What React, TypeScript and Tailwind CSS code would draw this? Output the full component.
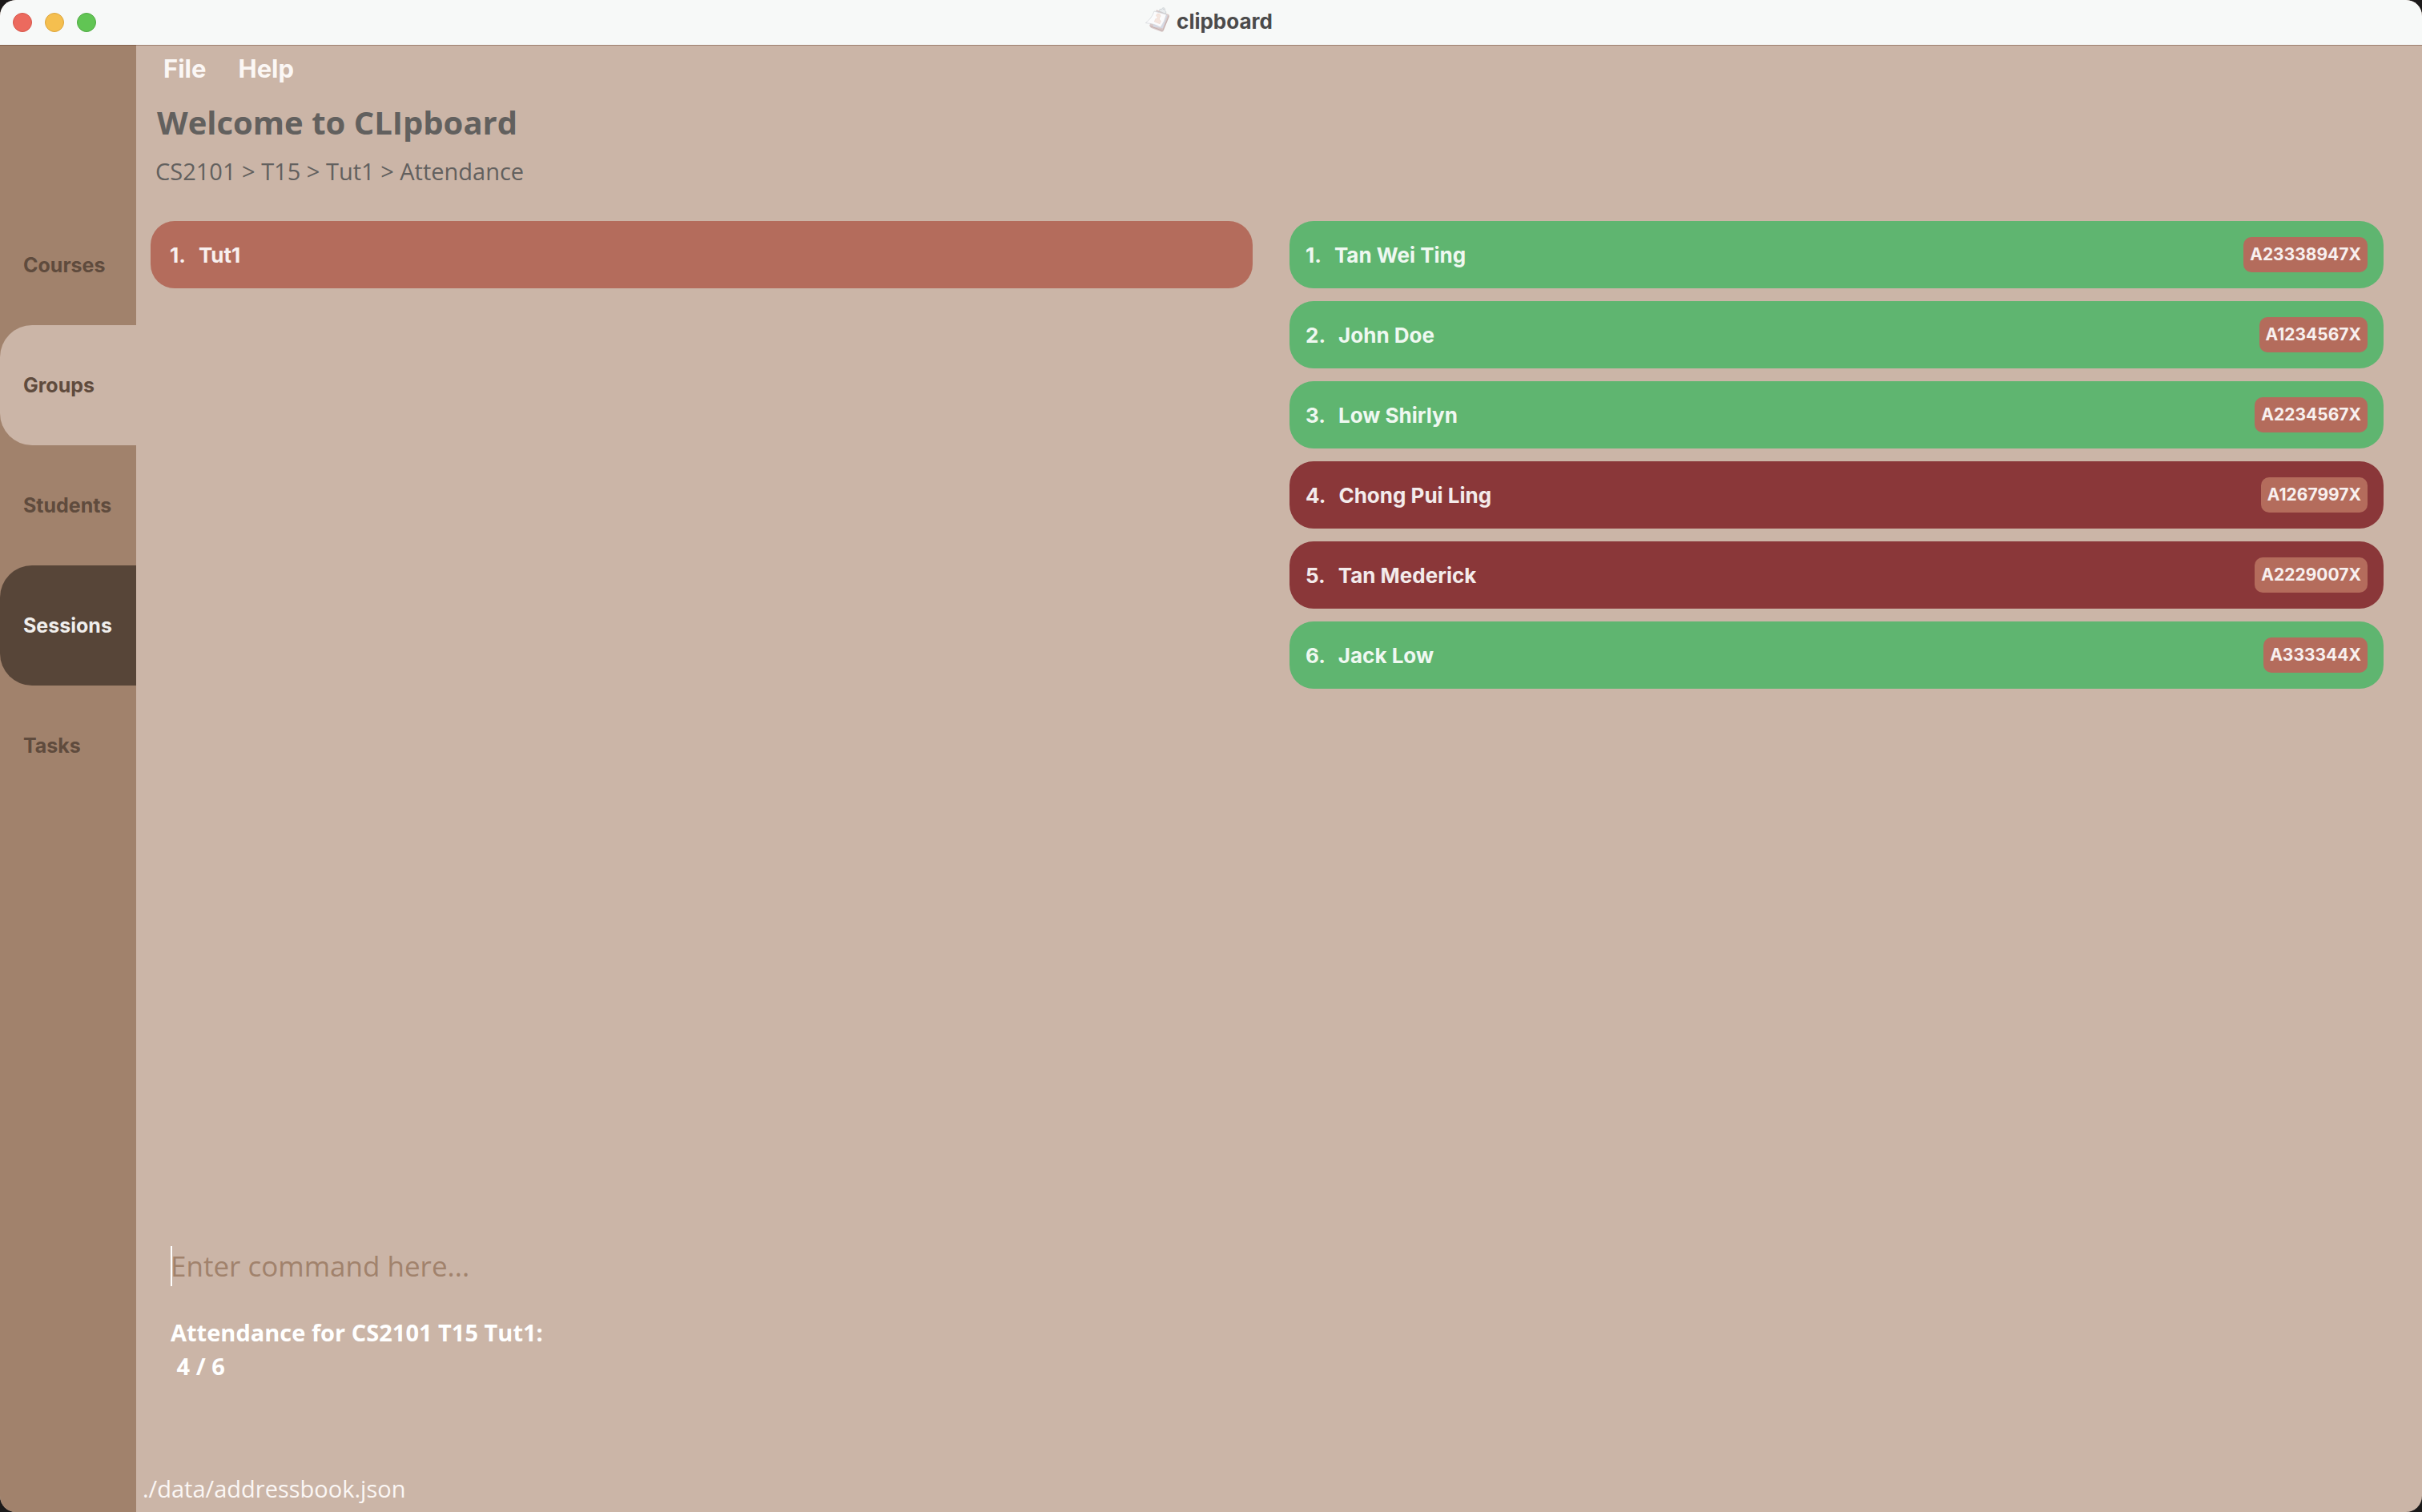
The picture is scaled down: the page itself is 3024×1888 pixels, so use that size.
import React from "react";

type Tab = { name: string; state: "idle" | "open" | "active" };
type Student = { name: string; id: string; present: boolean };

const tabs: Tab[] = [
  { name: "Courses", state: "idle" },
  { name: "Groups", state: "open" },
  { name: "Students", state: "idle" },
  { name: "Sessions", state: "active" },
  { name: "Tasks", state: "idle" },
];

const tabStyles: Record<Tab["state"], string> = {
  idle: "text-[#5f4b3d]",
  open: "bg-[#cbb5a7] text-[#5f4b3d]",
  active: "bg-[#574538] text-[#f0eeec]",
};

const sessions = ["Tut1"];

const students: Student[] = [
  { name: "Tan Wei Ting", id: "A23338947X", present: true },
  { name: "John Doe", id: "A1234567X", present: true },
  { name: "Low Shirlyn", id: "A2234567X", present: true },
  { name: "Chong Pui Ling", id: "A1267997X", present: false },
  { name: "Tan Mederick", id: "A2229007X", present: false },
  { name: "Jack Low", id: "A333344X", present: true },
];

function ClipboardIcon() {
  return (
    <svg viewBox="0 0 120 120" className="size-10" aria-hidden="true">
      <path d="M57 19 L102 36 Q107 38 105 43 L83 98 Q81 102 76 101 L36 86 L30 78 Z" fill="#d9c9c8" />
      <path d="M34 80 L76 96 Q80 97 82 93 L103 43" fill="none" stroke="#c4b0af" strokeWidth="3" />
      <path d="M56 24 L98 40 L80 88 L44 82 Z" fill="#d5dae6" />
      <path d="M48 24 L94 36 Q88 62 72 85 Q50 70 16 68 Q40 50 48 24 Z" fill="#fbfbfc" stroke="#cfd1d6" strokeWidth="2" />
      <path d="M56 42 a8 8 0 1 1 12 6 l-1 7 l6 5 l-4 11 l-20 -8 l4 -10 l7 -1 l1 -5 Z" fill="#f5e6df" stroke="#ead3c8" strokeWidth="1.5" />
      <path d="M66 23 L70 16 L77 17 Q77 10 84 11 Q91 13 88 21 L93 26 L91 34 Z" fill="#e9ecee" stroke="#c3c8cc" strokeWidth="2" />
      <circle cx="83" cy="16" r="2" fill="#c3c8cc" />
    </svg>
  );
}

function TitleBar() {
  return (
    <header className="relative z-10 grid h-14 grid-cols-3 items-center bg-[#f7f9f8] px-4 shadow-[0_1px_0_rgba(90,50,30,0.4)]">
      <div className="flex gap-4">
        <button aria-label="Close" className="size-6 rounded-full border border-[#d65549] bg-[#ec6a5e]" />
        <button aria-label="Minimize" className="size-6 rounded-full border border-[#dba53d] bg-[#f5bf4f]" />
        <button aria-label="Zoom" className="size-6 rounded-full border border-[#50a943] bg-[#61c554]" />
      </div>
      <div className="flex items-center justify-center pr-2.5 pb-1 text-[26px] font-bold text-[#4b4b4b]">
        <ClipboardIcon />
        <h1 className="pl-1">clipboard</h1>
      </div>
    </header>
  );
}

function Sidebar() {
  return (
    <nav aria-label="Sections" className="flex w-[170px] shrink-0 flex-col bg-[#a1826c] pt-[200px]">
      {tabs.map((tab) => (
        <button
          key={tab.name}
          aria-current={tab.state === "active" ? "page" : undefined}
          className={`h-[150px] rounded-l-[40px] pt-0.5 pl-[29px] text-left text-[25px] font-bold ${tabStyles[tab.state]}`}
        >
          {tab.name}
        </button>
      ))}
    </nav>
  );
}

export default function App() {
  return (
    <div className="min-h-screen bg-[#1c1a1a] font-['Inter',sans-serif]">
      <div className="flex min-h-screen flex-col overflow-hidden rounded-[20px] bg-[#cbb5a7]">
        <TitleBar />
        <div className="flex flex-1">
          <Sidebar />
          <main className="flex min-w-0 flex-1 flex-col font-['Open_Sans',sans-serif]">
            <div role="menubar" className="flex h-[58px] items-center pt-0.5 pl-3.5 font-['Inter',sans-serif] text-[31px] font-bold text-[#fbf7f5]">
              <button role="menuitem" className="px-5">File</button>
              <button role="menuitem" className="px-5">Help</button>
            </div>

            <h2 className="mt-[11px] pl-[26px] text-[40px] leading-14 font-bold text-[#62605e]">Welcome to CLIpboard</h2>
            <p className="mt-[13px] pl-6 text-[29px] leading-10 text-[#62605e]">
              CS2101 &gt; T15 &gt; Tut1 &gt; Attendance
            </p>

            <div className="mt-[42px] grid flex-1 grid-cols-[1376fr_1366fr] items-start gap-[46px] pr-12 pl-[18px] font-['Inter',sans-serif] text-[26px] font-bold text-white/90">
              <ol>
                {sessions.map((name, i) => (
                  <li key={name} className="flex h-[84px] items-center gap-4 rounded-[30px] bg-[#b46c5c] px-6">
                    <span>{i + 1}.</span>
                    <span>{name}</span>
                  </li>
                ))}
              </ol>
              <ol className="flex flex-col gap-4">
                {students.map((s, i) => (
                  <li
                    key={s.id}
                    className={`flex h-[84px] items-center gap-4 rounded-[30px] px-5 ${s.present ? "bg-[#5fb570]" : "bg-[#8a3739]"}`}
                  >
                    <span>{i + 1}.</span>
                    <span className="flex-1">{s.name}</span>
                    <span className="flex h-11 items-center rounded-[10px] bg-[#b46c5c] px-2 text-[21px]">{s.id}</span>
                  </li>
                ))}
              </ol>
            </div>

            <div className="relative pl-[43px]">
              <span className="absolute h-[50px] w-0.5 bg-white" aria-hidden="true" />
              <input
                type="text"
                aria-label="Command"
                placeholder="Enter command here..."
                className="block h-[50px] w-full bg-transparent text-[35px] leading-[50px] text-white outline-none placeholder:text-[#a1826c]"
              />
            </div>
            <output className="mt-[37px] block pl-[43px] text-[29px] leading-[42px] font-bold whitespace-pre-wrap text-white">
              {"Attendance for CS2101 T15 Tut1:\n 4 / 6"}
            </output>
            <footer className="mt-[111px] pb-2 pl-2 text-[29px] leading-[42px] text-[#fbf7f5]">
              ./data/addressbook.json
            </footer>
          </main>
        </div>
      </div>
    </div>
  );
}
